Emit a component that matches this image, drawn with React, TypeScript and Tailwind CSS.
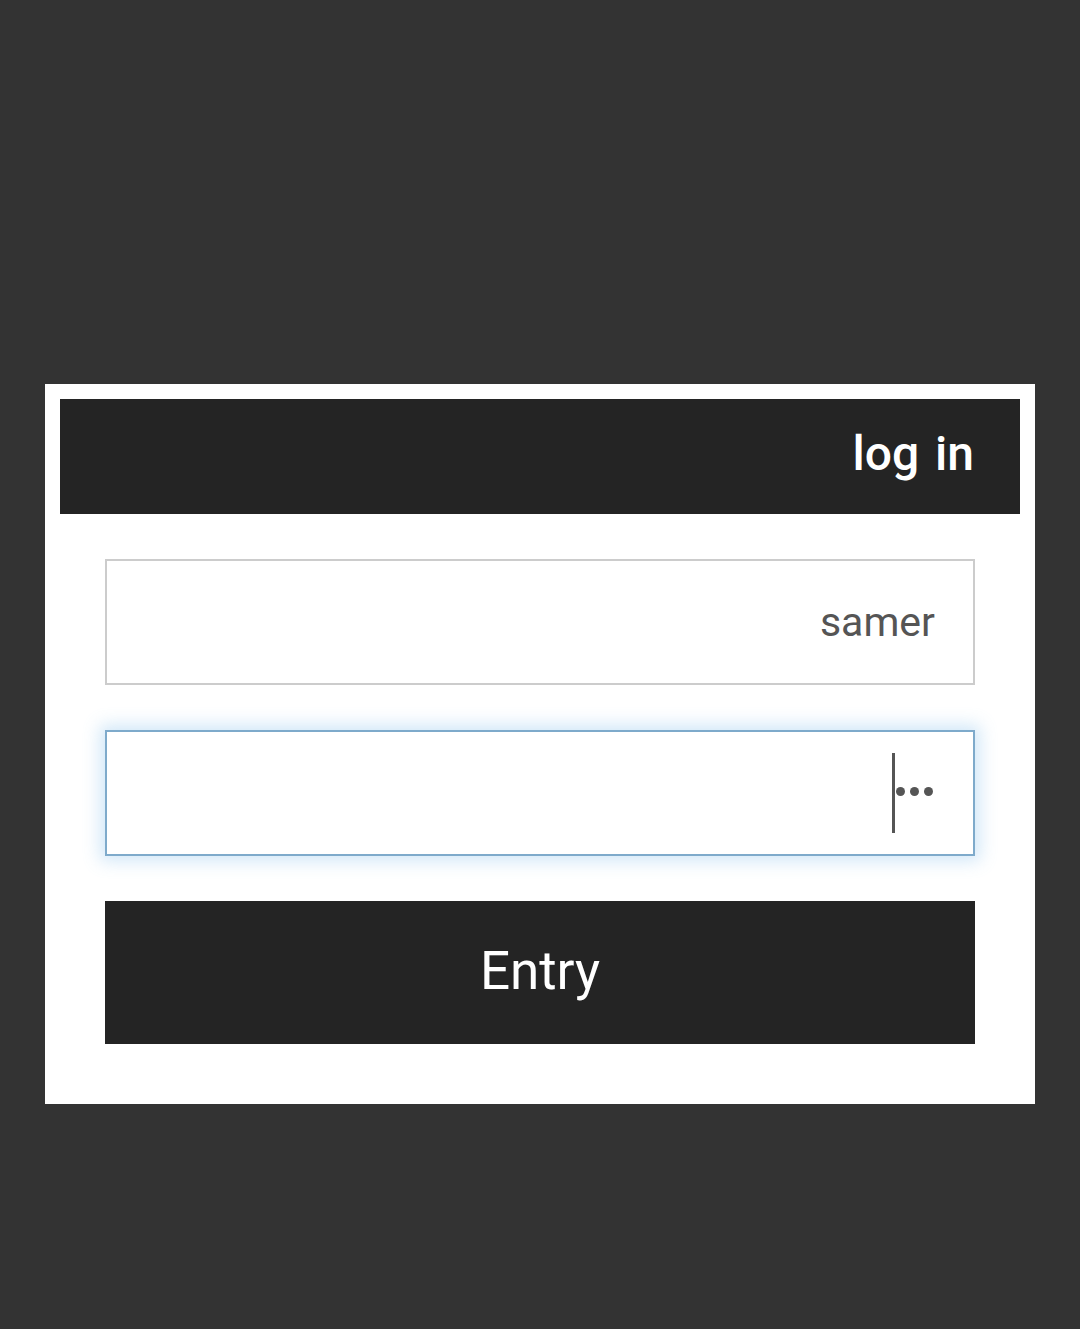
import React from 'react'

export default function App() {
  return (
    <div className="min-h-[1329px] w-full bg-[#333333] pt-[384px] font-['Roboto',sans-serif]">
      <div className="mx-[45px] bg-white p-[15px] pb-[60px]">
        {/* Header bar */}
        <div className="flex h-[115px] items-center justify-end bg-[#242424] pb-[6px] pr-[46px]">
          <span className="text-[48px] font-medium leading-none text-white [word-spacing:4px]">log in</span>
        </div>

        <div className="flex flex-col gap-[45px] px-[45px] pt-[45px]">
          {/* Username field */}
          <div className="flex h-[126px] items-center justify-end border-2 border-[#cccccc] bg-white pr-[38px]">
            <span className="text-[41px] leading-none text-[#555555]">samer</span>
          </div>

          {/* Password field (focused) */}
          <div className="flex h-[126px] items-center justify-end border-2 border-[#7eaacb] bg-white pr-[40px] shadow-[0_0_16px_5px_rgba(102,175,233,0.3)]">
            <div className="flex items-center">
              <div className="h-[80px] w-[3px] bg-[#555555]" />
              <div className="ml-[1px] mb-[4px] flex gap-[5px]">
                <span className="h-[9px] w-[9px] rounded-full bg-[#555555]" />
                <span className="h-[9px] w-[9px] rounded-full bg-[#555555]" />
                <span className="h-[9px] w-[9px] rounded-full bg-[#555555]" />
              </div>
            </div>
          </div>

          {/* Submit */}
          <button className="flex h-[143px] items-center justify-center bg-[#242424] pb-[2px]">
            <span className="text-[53px] leading-none text-white">Entry</span>
          </button>
        </div>
      </div>
    </div>
  )
}
